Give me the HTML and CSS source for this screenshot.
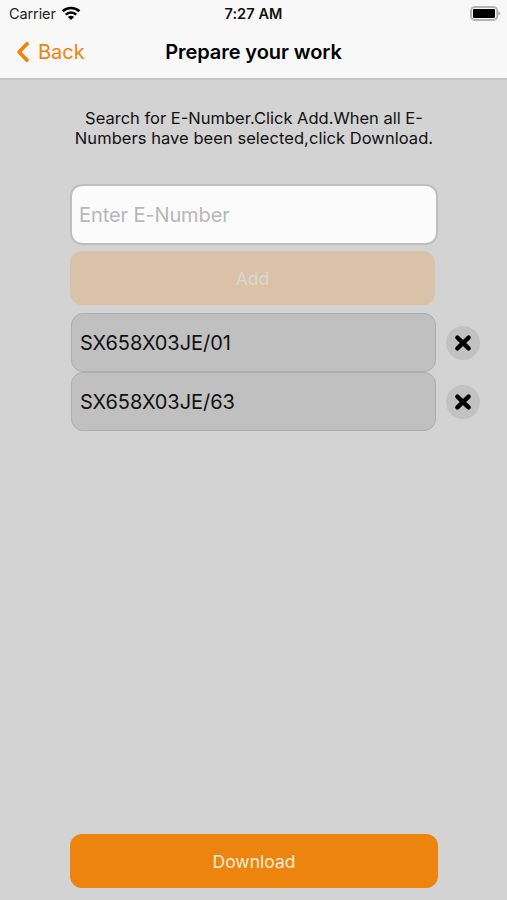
FILE: index.html
```html
<!DOCTYPE html>
<html lang="en">
<head>
<meta charset="utf-8">
<title>Prepare your work</title>
<link rel="stylesheet" href="styles.css">
</head>
<body>
<div class="screen">
  <header class="header">
    <div class="status">
      <div class="status-left">
        <span class="carrier">Carrier</span>
        <svg class="wifi" width="20" height="15" viewBox="0 0 20 15" fill="none" stroke="#000">
          <path d="M1.6 5.3C6.2.8 13.8.8 18.4 5.3" stroke-width="2.6"/>
          <path d="M4.7 8.7c2.9-2.9 7.7-2.9 10.6 0" stroke-width="2.4"/>
          <path d="M10 14 6.9 10.9q3.1-2.4 6.2 0z" fill="#000" stroke="none"/>
        </svg>
      </div>
      <span class="time">7:27 AM</span>
      <svg class="battery" width="31" height="15" viewBox="0 0 31 15">
        <rect x="1" y="1" width="26.2" height="13" rx="3.8" fill="#f8f8f8" stroke="#b4b4b4" stroke-width="2"/>
        <rect x="3" y="3" width="22" height="9" rx="1" fill="#000"/>
        <path d="M28.4 5.2q3.8 2.2 0 4.4z" fill="#aaa"/>
      </svg>
    </div>
    <nav class="nav">
      <a class="back">
        <svg width="14" height="22" viewBox="0 0 14 22" fill="none" stroke="#ed840e" stroke-width="3.7" stroke-linejoin="round"><path d="M12 1.7 3.1 11l8.9 9.3"/></svg>
        <span class="back-label">Back</span>
      </a>
      <h1 class="title">Prepare your work</h1>
    </nav>
  </header>
  <main class="content">
    <p class="hint"><span class="line-one">Search for E-Number.Click Add.When all E-</span><br><span class="line-two">Numbers have been selected,click Download.</span></p>
    <div class="field"><span class="placeholder">Enter E-Number</span></div>
    <div class="button add"><span>Add</span></div>
    <ul class="list">
      <li class="row">
        <div class="item"><span>SX658X03JE/01</span></div>
        <div class="remove"><svg width="18" height="18" viewBox="0 0 18 18" stroke="#000" stroke-width="4.4" stroke-linecap="round"><path d="M3.4 3.6 14.6 14.4M14.6 3.6 3.4 14.4"/></svg></div>
      </li>
      <li class="row">
        <div class="item"><span>SX658X03JE/63</span></div>
        <div class="remove"><svg width="18" height="18" viewBox="0 0 18 18" stroke="#000" stroke-width="4.4" stroke-linecap="round"><path d="M3.4 3.6 14.6 14.4M14.6 3.6 3.4 14.4"/></svg></div>
      </li>
    </ul>
    <div class="button download"><span>Download</span></div>
  </main>
</div>
</body>
</html>
```
FILE: styles.css
```css
* { box-sizing: border-box; }
body {
  margin: 0;
  font-family: Inter, "Liberation Sans", sans-serif;
  color: #111;
  background: #d3d3d3;
}
.screen {
  width: 507px;
  height: 900px;
  display: flex;
  flex-direction: column;
  overflow: hidden;
}
.header {
  height: 80px;
  background: #f8f8f8;
  border-bottom: 2px solid #c6c6c6;
}
.status {
  height: 27px;
  display: grid;
  grid-template-columns: 1fr auto 1fr;
  align-items: center;
  padding: 0 6px 0 9px;
}
.status-left { display: flex; align-items: center; gap: 5px; }
.carrier { font-size: 14.5px; letter-spacing: -0.1px; color: #222; }
.time { margin-left: -3px; font-size: 14.5px; font-weight: 600; letter-spacing: 0.1px; }
.battery { justify-self: end; }
.nav {
  height: 50px;
  display: grid;
  grid-template-columns: 1fr auto 1fr;
  align-items: center;
  padding: 0 16px;
}
.back {
  display: flex;
  align-items: center;
  gap: 8px;
  color: #ed840e;
  font-size: 20px;
}
.title {
  margin: 0;
  font-size: 20px;
  line-height: 24px;
  font-weight: 600;
  letter-spacing: -0.08px;
  color: #000;
}
.content {
  flex: 1;
  display: flex;
  flex-direction: column;
  padding: 28px 27px 12px 70px;
}
.hint {
  margin: 0 0 36px;
  width: 368px;
  text-align: center;
  white-space: nowrap;
  font-size: 16.5px;
  line-height: 20px;
}
.line-two { letter-spacing: 0.05px; }
.field {
  width: 368px;
  height: 61px;
  display: flex;
  align-items: center;
  padding: 1px 0 0 7px;
  border: 2px solid #bebebe;
  border-radius: 12px;
  background: #fbfbfb;
}
.placeholder { font-size: 20px; letter-spacing: -0.1px; color: #b7b7b7; }
.button {
  display: flex;
  align-items: center;
  justify-content: center;
  height: 54px;
  border-radius: 12px;
  font-size: 17.5px;
}
.add {
  width: 365px;
  margin-top: 6px;
  background: #d9c2a8;
  color: #dcd6d0;
}
.list { list-style: none; margin: 8px 0 0; padding: 0 0 0 1px; }
.row { display: flex; align-items: center; gap: 10px; }
.item {
  width: 366px;
  height: 59px;
  display: flex;
  align-items: center;
  padding: 1px 0 0 8px;
  border: 1px solid #adadad;
  border-radius: 12px;
  background: #c0c0c0;
  font-size: 20px;
  letter-spacing: -0.05px;
}
.remove {
  width: 34px;
  height: 34px;
  display: flex;
  align-items: center;
  justify-content: center;
  border-radius: 50%;
  background: #c2c2c2;
}
.download {
  width: 368px;
  margin-top: auto;
  background: #ed840e;
  color: #fdecd6;
}
```
